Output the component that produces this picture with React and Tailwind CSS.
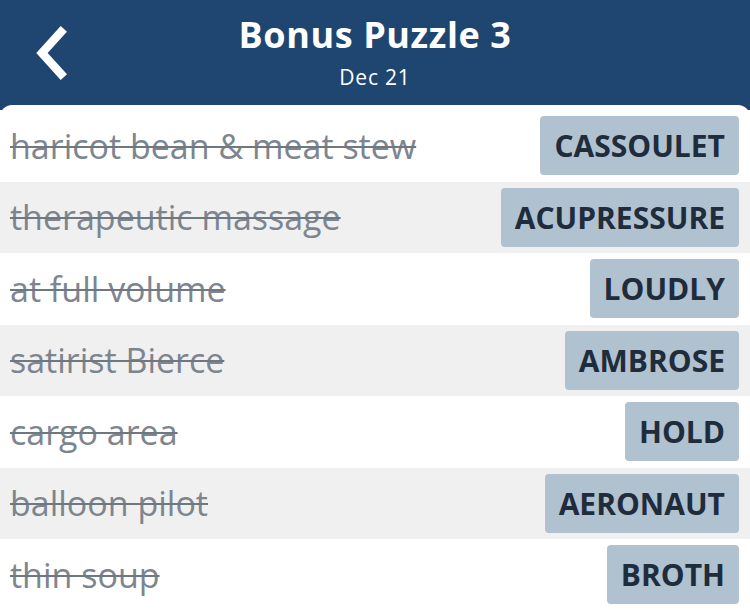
import React from "react";

const clues = [
  { clue: "haricot bean & meat stew", answer: "CASSOULET" },
  { clue: "therapeutic massage", answer: "ACUPRESSURE" },
  { clue: "at full volume", answer: "LOUDLY" },
  { clue: "satirist Bierce", answer: "AMBROSE" },
  { clue: "cargo area", answer: "HOLD" },
  { clue: "balloon pilot", answer: "AERONAUT" },
  { clue: "thin soup", answer: "BROTH" },
];

const App = () => {
  return (
    <div className="w-[750px] h-[610px] overflow-hidden bg-[#1f4670] font-['Open_Sans',sans-serif]">
      <div className="relative h-[105px] flex flex-col items-center">
        <button className="absolute left-[27px] top-[25px] w-[46px] h-[56px] flex items-center justify-center">
          <svg width="40" height="56" viewBox="0 0 40 56" fill="none">
            <path d="M31 7 L12 28 L31 49" stroke="white" strokeWidth="8.5" strokeLinecap="square" strokeLinejoin="miter" />
          </svg>
        </button>
        <h1 className="mt-[11px] text-[36px] leading-[48px] font-bold text-white tracking-[0.6px]">
          Bonus Puzzle 3
        </h1>
        <p className="mt-[4px] text-[21px] leading-[28px] text-white tracking-[0.8px]">Dec 21</p>
      </div>

      <div className="bg-white rounded-t-[12px] pt-[5px]">
        {clues.map((item, index) => (
          <div
            key={index}
            className={`h-[71.5px] flex items-center justify-between pl-[10px] pr-[11px] ${index % 2 === 1 ? "bg-[#f0f0f0]" : "bg-white"}`}
          >
            <span className="text-[34px] leading-[40px] text-[#7d858e] line-through decoration-[#6f7780] decoration-2">
              {item.clue}
            </span>
            <span className="h-[59px] px-[14px] flex items-center rounded-[4px] bg-[#b0c1d0] text-[30px] font-bold text-[#1e2c3b]">
              {item.answer}
            </span>
          </div>
        ))}
      </div>
    </div>
  );
};

export default App;
